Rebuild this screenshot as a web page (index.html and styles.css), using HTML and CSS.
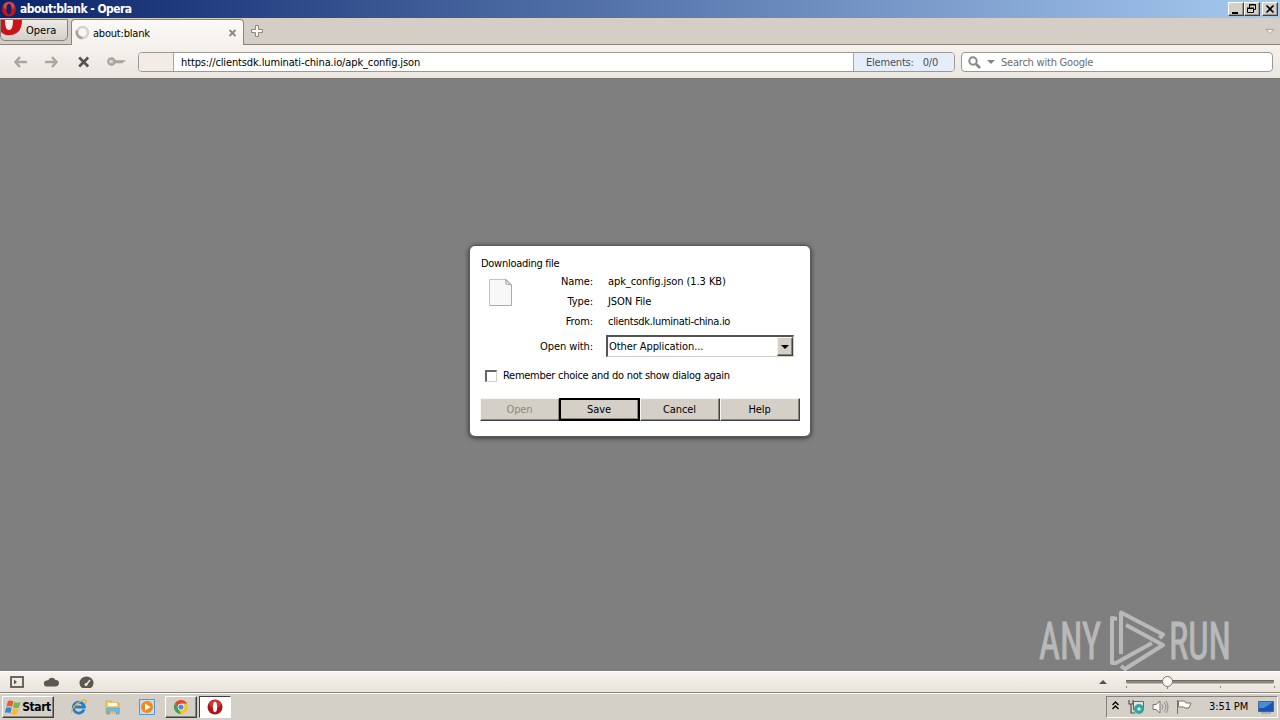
FILE: index.html
```
<!DOCTYPE html>
<html lang="en">
<head>
    <meta charset="UTF-8">
    <meta name="viewport" content="width=device-width, initial-scale=1.0">
    <title>about:blank - Opera</title>
    <link rel="stylesheet" href="styles.css">
</head>
<body>
    <header class="titlebar">
        <svg class="title-logo" width="16" height="16" viewBox="0 0 16 16">
            <ellipse cx="8" cy="8" rx="7" ry="7.5" fill="#c4161c"/>
            <ellipse cx="8" cy="5" rx="5.5" ry="4" fill="#e46a68" opacity=".6"/>
            <ellipse cx="8" cy="8" rx="2.6" ry="5.4" fill="#0b246a"/>
        </svg>
        <span class="title-text">about:blank - Opera</span>
        <div class="window-buttons">
            <button class="win-btn"><svg width="14" height="12" viewBox="0 0 14 12"><path d="M3 9h6v2H3z"/></svg></button>
            <button class="win-btn"><svg width="14" height="12" viewBox="0 0 14 12"><path d="M4.500 5V1.500h6v5H9M4 2h7M2.500 5.500h6v4h-6zM2 5h7" fill="none" stroke="#000"/></svg></button>
            <button class="win-btn win-close"><svg width="14" height="12" viewBox="0 0 14 12"><path d="M3.500 2.500l7 7M10.500 2.500l-7 7" stroke="#000" stroke-width="1.700"/></svg></button>
        </div>
    </header>

    <nav class="tabbar">
        <button class="opera-menu">
            <svg class="opera-mark" width="22" height="16" viewBox="0 0 22 16">
                <path d="M0 0h21c0 8-3 14-11 15C5 15.500 2 14.500 0 12z" fill="#c9141b"/>
                <path d="M4 0h8c0 6-1 10-4 10S4 6 4 0z" fill="#f4efeb"/>
            </svg>
            <span class="opera-label">Opera</span>
        </button>
        <div class="tab">
            <svg width="16" height="16" viewBox="0 0 16 16" fill="none" stroke-width="2.500">
                <circle cx="7.500" cy="7.500" r="5.500" stroke="#d6d3ce"/>
                <path d="M2.200 5.500A5.500 5.500 0 0 0 7.500 13" stroke="#a3a19d"/>
            </svg>
            <span class="tab-title">about:blank</span>
            <svg width="9" height="9" viewBox="0 0 9 9"><path d="M1.500 1l6 6M7.500 1l-6 6" stroke="#8b8883" stroke-width="1.800"/></svg>
        </div>
        <svg class="new-tab" width="14" height="14" viewBox="0 0 14 14"><path d="M5.500 1.500h3v4h4v3h-4v4h-3v-4h-4v-3h4z" fill="#faf8f5" stroke="#8d8982"/></svg>
        <svg class="tab-list" width="10" height="7" viewBox="0 0 10 7"><path d="M1 1.500h8L5 5.500z" fill="#f1eee9" stroke="#a8a49c"/></svg>
    </nav>

    <div class="toolbar">
        <div class="nav-icons">
            <svg width="14" height="12" viewBox="0 0 14 12"><path d="M6 1L1.500 6 6 11M2 6h11" fill="none" stroke="#aaa6a0" stroke-width="2.400"/></svg>
            <svg width="14" height="12" viewBox="0 0 14 12"><path d="M7 1l4.500 5L7 11M0 6h11" fill="none" stroke="#aaa6a0" stroke-width="2.400"/></svg>
            <svg width="12" height="12" viewBox="0 0 12 12"><path d="M1.200 1.500l9 9M10.200 1.500l-9 9" stroke="#55524e" stroke-width="2.600"/></svg>
            <svg width="19" height="10" viewBox="0 0 19 10"><circle cx="4.500" cy="4.500" r="3.300" fill="#c5c1bb" stroke="#a6a29c" stroke-width="2"/><path d="M8 4h10.500M8 5.500h8" stroke="#a6a29c" stroke-width="1.600"/><circle cx="3.500" cy="4.500" r="1" fill="#f3efeb"/></svg>
        </div>
        <div class="address">
            <div class="address-badge"></div>
            <div class="address-url"><span class="url">https://clientsdk.luminati-china.io/apk_config.json</span></div>
            <div class="address-elements"><span>Elements:</span><span>0/0</span></div>
        </div>
        <div class="search">
            <svg width="13" height="13" viewBox="0 0 13 13"><circle cx="5" cy="5" r="3.700" fill="none" stroke="#8b8a88" stroke-width="2"/><path d="M8 8l4 4" stroke="#8b8a88" stroke-width="2.600"/></svg>
            <svg class="search-arrow" width="8" height="4" viewBox="0 0 8 4"><path d="M0 0h8L4 4z" fill="#888683"/></svg>
            <span class="search-text">Search with Google</span>
        </div>
    </div>

    <main class="page">
        <section class="dialog">
            <h1 class="dialog-title">Downloading file</h1>
            <div class="file-info">
                <svg class="file-icon" width="26" height="30" viewBox="0 0 26 30">
                    <path d="M1.500 1.500h17l5 5.500v20.500h-22z" fill="#f8f8f8" stroke="#c3c3c3"/>
                    <path d="M1.500 27.500h22V7" fill="none" stroke="#acacac"/>
                    <path d="M17.500 1.500l.5 4.500 5.500 1z" fill="#e4e4e4" stroke="#a7a7a7"/>
                </svg>
                <dl class="fields">
                    <dt>Name:</dt><dd>apk_config.json (1.3 KB)</dd>
                    <dt>Type:</dt><dd>JSON File</dd>
                    <dt>From:</dt><dd class="host">clientsdk.luminati-china.io</dd>
                    <dt class="open-with">Open with:</dt>
                    <dd class="select"><span>Other Application...</span><span class="select-arrow"><svg width="8" height="4" viewBox="0 0 8 4"><path d="M0 0h8L4 4z"/></svg></span></dd>
                </dl>
            </div>
            <label class="remember"><span class="checkbox"></span><span>Remember choice and do not show dialog again</span></label>
            <div class="dialog-buttons">
                <button class="btn btn-disabled">Open</button>
                <button class="btn btn-default">Save</button>
                <button class="btn">Cancel</button>
                <button class="btn">Help</button>
            </div>
        </section>
        <svg class="watermark" width="204" height="66" viewBox="0 0 204 66">
            <text x="4" y="50" textLength="62" lengthAdjust="spacingAndGlyphs">ANY</text>
            <g fill="none" stroke="#b9b9b9" stroke-width="4" stroke-linejoin="round">
                <path d="M82 10l-5-1v45h4l36-20"/>
                <path d="M86 45V3.500l42 22-3.500 3.500"/>
                <path d="M91 16l37 20-38 24-4-3"/>
            </g>
            <text x="134" y="50" textLength="62" lengthAdjust="spacingAndGlyphs">RUN</text>
        </svg>
    </main>

    <div class="statusbar">
        <svg width="14" height="12" viewBox="0 0 14 12"><rect x="1" y="1" width="12" height="10" fill="none" stroke="#5c5953" stroke-width="1.800"/><path d="M4 3.500L7 6 4 8.500z" fill="#5c5953"/></svg>
        <svg width="15" height="11" viewBox="0 0 15 11"><path d="M3 10.500a3 3 0 0 1-.3-6C3.500 4 4 4.500 4.300 4A4 4 0 0 1 11.500 4a3.200 3.200 0 0 1 .5 6.500z" fill="#5c5953"/></svg>
        <svg width="15" height="12" viewBox="0 0 15 12"><path d="M3 12a7 6.500 0 1 1 9 0z" fill="#5c5953"/><path d="M7 9l4-5" stroke="#ece6df" stroke-width="1.500"/><circle cx="7" cy="8.500" r="1.500" fill="#ece6df"/></svg>
        <div class="zoom">
            <svg width="8" height="4" viewBox="0 0 8 4"><path d="M0 4h8L4 0z" fill="#55524e"/></svg>
            <svg width="150" height="16" viewBox="0 0 150 16">
                <rect x="1" y="6" width="148" height="3.500" rx="1.500" fill="#8b867f"/>
                <path d="M1 6.500h148" stroke="#6d6862"/>
                <path d="M1.500 12v2M42.500 12v3M95.500 12v2M149.500 12v2" stroke="#8b867f"/>
                <circle cx="42.500" cy="7.500" r="5" fill="#fcfbf9" stroke="#77736d"/>
            </svg>
        </div>
    </div>

    <footer class="taskbar">
        <button class="start">
            <svg width="17" height="16" viewBox="0 0 17 16">
                <path d="M3 2c2-1 4-.5 5.500.5L7 8C5.500 7 3.500 6.500 1.500 7.500z" fill="#ef5a28"/>
                <path d="M9.500 3c2 1 4 1 6 0L14 8.500c-2 1-4 1-6 0z" fill="#75b843"/>
                <path d="M1.200 8.700c2-1 4-.5 5.500.5L5.200 14.500C4 13.500 2 13-.3 14z" fill="#3c83d4"/>
                <path d="M7.700 9.700c2 1 4 1 6 0L12.200 15c-2 1-4 1-6 0z" fill="#fbbb20"/>
            </svg>
            <span>Start</span>
        </button>
        <div class="tasks">
            <span class="task">
                <svg width="18" height="16" viewBox="0 0 18 16"><path d="M14 10.500A5.500 5.500 0 1 1 14.300 8H5" fill="none" stroke="#237dc9" stroke-width="2.800"/><path d="M2 14C0 11 6 4 12 1.500c4-1.500 5 0 3.500 3" fill="none" stroke="#e0b43a" stroke-width="1.300"/></svg>
            </span>
            <span class="task">
                <svg width="18" height="16" viewBox="0 0 18 16"><path d="M2 2h5l1 2h7v10H2z" fill="#edd17c" stroke="#d3ad4d"/><path d="M4 4h9v3H4z" fill="#fff9df"/><path d="M3 15V9h12v6h-2.500v-3h-7v3z" fill="#7dbde3" stroke="#4795c5" stroke-width=".7"/></svg>
            </span>
            <span class="task">
                <svg width="18" height="16" viewBox="0 0 18 16"><path d="M1.500.5h15v15h-15z" fill="#c4ddf2" stroke="#5b95cf"/><circle cx="9" cy="8" r="6" fill="#f18a18"/><path d="M7 4.500L12.500 8 7 11.500z" fill="#fff"/></svg>
            </span>
            <span class="task task-open">
                <svg width="16" height="16" viewBox="0 0 16 16"><circle cx="8" cy="8" r="7" fill="#f4c52c"/><path d="M1.900 4.500a7 7 0 0 1 12.200 0H8L5 10z" fill="#df4636"/><path d="M1.900 4.500L5.500 10 8 15A7 7 0 0 1 1.900 4.500z" fill="#37a150"/><circle cx="8" cy="8" r="3.300" fill="#fff"/><circle cx="8" cy="8" r="2.600" fill="#438be8"/></svg>
            </span>
            <span class="task task-active">
                <svg width="16" height="16" viewBox="0 0 16 16"><circle cx="8" cy="8" r="7.500" fill="#b51218"/><ellipse cx="8" cy="5" rx="6" ry="4" fill="#df4e4b" opacity=".6"/><ellipse cx="8" cy="8" rx="2.100" ry="5.200" fill="#fff"/></svg>
            </span>
        </div>
        <div class="tray">
            <svg class="tray-more" width="7" height="9" viewBox="0 0 7 9"><path d="M.5 4L3.500 1l3 3M.5 8L3.500 5l3 3" fill="none" stroke="#000" stroke-width="1.400"/></svg>
            <svg width="17" height="16" viewBox="0 0 17 16"><path d="M5.500 2.500h10v8h-10z" fill="#e6e8e6" stroke="#666"/><path d="M1 1v4h4V1M3 5v9h4" fill="none" stroke="#555" stroke-width="1.200"/><circle cx="11" cy="10" r="5" fill="#37a49e"/><circle cx="11" cy="10" r="1.800" fill="#c5eee5"/></svg>
            <svg width="17" height="16" viewBox="0 0 17 16"><path d="M1 5.500h3L8 2v12l-4-3.500H1z" fill="#f8f8f8" stroke="#77746f"/><path d="M10 5.500q2 2.500 0 5M12 3.500q4 4.500 0 9M14 2q4 6 0 12" fill="none" stroke="#8d8983"/></svg>
            <svg width="17" height="16" viewBox="0 0 17 16"><path d="M1.500 1v14M2.500 2h6l1.500 2h5l-2 5H9L7.500 8h-5z" fill="#fafafa" stroke="#77746f"/></svg>
            <span class="clock">3:51 PM</span>
            <svg width="16" height="13" viewBox="0 0 16 13"><path d="M.5.500h15v10H.5z" fill="#1855b0" stroke="#4a6585"/><path d="M1 1h14L6 7H1z" fill="#468cda"/><path d="M3 12h10" stroke="#7a8ba0"/></svg>
        </div>
    </footer>
</body>
</html>
```
FILE: styles.css
```
* {
    box-sizing: border-box;
}
body {
    margin: 0;
    width: 1280px;
    height: 720px;
    overflow: hidden;
    display: flex;
    flex-direction: column;
    font-family: "DejaVu Sans Condensed", "DejaVu Sans", sans-serif;
    font-stretch: condensed;
    font-size: 11px;
    line-height: 14px;
    color: #000;
    background: #d4d0c8;
}
svg {
    display: block;
    flex: none;
}
span {
    white-space: nowrap;
}
button {
    font: inherit;
    color: inherit;
    padding: 0;
    border: none;
    border-radius: 0;
    display: flex;
    align-items: center;
    justify-content: center;
}

/* window title */
.titlebar {
    height: 18px;
    flex: none;
    display: flex;
    align-items: center;
    padding: 0 2px 0 1px;
    background: linear-gradient(to right, #0a246a, #a6caf0);
}
.title-text {
    margin-left: 3px;
    color: #fff;
    font-weight: bold;
    font-size: 12px;
    letter-spacing: -0.55px;
}
.window-buttons {
    display: flex;
    margin-left: auto;
}
.win-btn {
    width: 16px;
    height: 14px;
    background: #d4d0c8;
    border: 1px solid;
    border-color: #fff #404040 #404040 #fff;
    box-shadow: inset -1px -1px #a09c94;
}
.win-close {
    margin-left: 2px;
}

/* tabs */
.tabbar {
    height: 27px;
    flex: none;
    display: flex;
    align-items: flex-start;
    background: #d4cec6;
    border-bottom: 1px solid #8a867e;
}
.opera-menu {
    width: 68px;
    height: 22px;
    margin-top: 1px;
    justify-content: flex-start;
    align-items: flex-start;
    background: linear-gradient(#eeeae6, #d3cfcb);
    border: 1px solid #85817c;
    border-radius: 0 0 5px 5px;
}
.opera-label {
    margin: 4px 0 0 3px;
}
.tab {
    width: 173px;
    height: 27px;
    margin: 1px 0 -1px 3px;
    padding: 0 6px 0 3px;
    display: flex;
    align-items: center;
    background: linear-gradient(#fbf9f6, #f5f2ed);
    border: 1px solid #8a867e;
    border-bottom: none;
    border-radius: 4px 4px 0 0;
}
.tab-title {
    flex: 1;
    margin: 1px 0 0 2px;
    letter-spacing: -0.2px;
}
.new-tab {
    margin: 6px 0 0 6px;
}
.tab-list {
    margin: 10px 5px 0 auto;
}

/* address bar */
.toolbar {
    height: 34px;
    flex: none;
    display: flex;
    align-items: flex-start;
    padding: 7px 7px 0 14px;
    background: linear-gradient(#f5f2ed, #ebe5df);
    border-bottom: 1px solid #77736e;
}
.nav-icons {
    width: 124px;
    height: 20px;
    display: flex;
    align-items: center;
    gap: 17px;
}
.nav-icons svg:nth-child(3) {
    margin-left: 2px;
}
.address {
    width: 817px;
    height: 20px;
    display: flex;
    background: #fff;
    border: 1px solid #9c9892;
    border-radius: 4px;
    overflow: hidden;
}
.address-badge {
    width: 35px;
    background: #f3ece6;
    border-right: 1px solid #a8a49e;
}
.address-url {
    flex: 1;
    padding: 3px 7px 0;
    letter-spacing: -0.13px;
}
.address-elements {
    width: 101px;
    padding: 3px 0 0 12px;
    display: flex;
    gap: 9px;
    letter-spacing: -0.2px;
    color: #4a4f5c;
    background: #e6edfa;
    border-left: 1px solid #a8a49e;
}
.search {
    width: 312px;
    height: 20px;
    margin-left: 6px;
    padding-left: 6px;
    display: flex;
    align-items: center;
    background: #fff;
    border: 1px solid #9c9892;
    border-radius: 4px;
}
.search-arrow {
    margin-left: 6px;
}
.search-text {
    margin: 1px 0 0 6px;
    letter-spacing: -0.22px;
    color: #6d6d6d;
}

/* page and download dialog */
.page {
    position: relative;
    height: 592px;
    flex: none;
    display: flex;
    justify-content: center;
    align-items: flex-start;
    padding-top: 167px;
    background: #7f7f7f;
}
.dialog {
    width: 340px;
    height: 190px;
    padding: 11px 10px 0;
    background: #fff;
    border-radius: 5px;
    box-shadow: 0 0 0 1px #5b5b5b, 0 1px 5px 1px rgba(0, 0, 0, 0.65);
}
.dialog-title {
    height: 15px;
    margin: 0 0 0 1px;
    font-size: 11px;
    font-weight: normal;
    line-height: 14px;
    letter-spacing: -0.28px;
}
.file-info {
    display: flex;
}
.file-icon {
    margin: 6px 0 0 8px;
}
.fields {
    margin: 0;
    width: 279px;
    display: grid;
    grid-template-columns: 79px 187px;
    grid-template-rows: 20px 20px 20px 28px;
    column-gap: 13px;
    align-items: center;
}
dt {
    text-align: right;
    letter-spacing: -0.1px;
}
dd {
    margin: 0 0 0 2px;
    letter-spacing: -0.08px;
}
.host {
    letter-spacing: -0.3px;
}
.open-with {
    padding-top: 1px;
}
.select {
    height: 22px;
    width: 188px;
    margin: 0;
    padding: 0 0 0 1px;
    display: flex;
    align-items: center;
    justify-content: space-between;
    border: 1px solid #d4d0c8;
    border-top: 2px solid #565350;
    border-left: 2px solid #565350;
}
.select-arrow {
    width: 16px;
    height: 19px;
    display: flex;
    align-items: center;
    justify-content: center;
    background: #d4d0c8;
    border: 1px solid;
    border-color: #f4f2ee #404040 #404040 #f4f2ee;
    box-shadow: inset -1px -1px #88847c;
}
.remember {
    height: 15px;
    margin: 8px 0 0 5px;
    display: flex;
    align-items: center;
    letter-spacing: -0.27px;
}
.checkbox {
    width: 12px;
    height: 12px;
    margin-right: 6px;
    background: #fff;
    border: 1px solid #d4d0c8;
    border-top: 2px solid #666;
    border-left: 2px solid #666;
}
.dialog-buttons {
    display: flex;
    margin-top: 15px;
}
.btn {
    width: 80px;
    height: 23px;
    padding-right: 1px;
    background: #d4d0c8;
    border: 1px solid;
    border-color: #f7f5f2 #404040 #404040 #f7f5f2;
    box-shadow: inset -1px -1px #8a867e;
    letter-spacing: -0.1px;
}
.btn-disabled {
    color: #8c8983;
}
.btn-default {
    width: 81px;
    margin: 0 0 0 -1px;
    border: 2px solid #000;
}
.watermark {
    position: absolute;
    left: 1035px;
    top: 530px;
}
.watermark text {
    font-family: Roboto, sans-serif;
    font-size: 51px;
    fill: #b9b9b9;
    stroke: #b9b9b9;
    stroke-width: 1px;
}

/* bottom bars */
.statusbar {
    height: 21px;
    flex: none;
    display: flex;
    align-items: center;
    gap: 20px;
    padding: 0 5px 1px 10px;
    background: linear-gradient(#f7f2ed, #e9e2dc);
    border-top: 1px solid #fff;
}
.zoom {
    display: flex;
    align-items: center;
    gap: 18px;
    margin-left: auto;
}
.taskbar {
    height: 28px;
    flex: none;
    display: flex;
    align-items: flex-start;
    padding: 3px 2px 0;
    background: #d4d0c8;
    border-top: 1px solid #85827c;
    box-shadow: inset 0 1px #fff;
}
.start {
    width: 52px;
    height: 22px;
    font-weight: bold;
    font-size: 12px;
    letter-spacing: -0.4px;
    background: #d4d0c8;
    border: 1px solid;
    border-color: #fff #404040 #404040 #fff;
    box-shadow: inset -1px -1px #8a867e;
}
.tasks {
    display: flex;
    margin-left: 9px;
    gap: 2px;
}
.task {
    width: 32px;
    height: 22px;
    display: flex;
    align-items: center;
    justify-content: center;
    border: 1px solid transparent;
}
.task-open {
    border-color: #fff #404040 #404040 #fff;
    box-shadow: inset -1px -1px #8a867e;
}
.task-active {
    background: #fff;
    border-color: #404040 #fff #fff #404040;
}
.tray {
    width: 172px;
    height: 22px;
    margin-left: auto;
    padding: 0 1px 0 5px;
    display: flex;
    align-items: center;
    gap: 7px;
    border: 1px solid;
    border-color: #85827c #fff #fff #85827c;
}
.tray-more {
    margin: -3px 2px 0 0;
}
.clock {
    margin: 0 3px 0 9px;
    letter-spacing: -0.1px;
}
```
